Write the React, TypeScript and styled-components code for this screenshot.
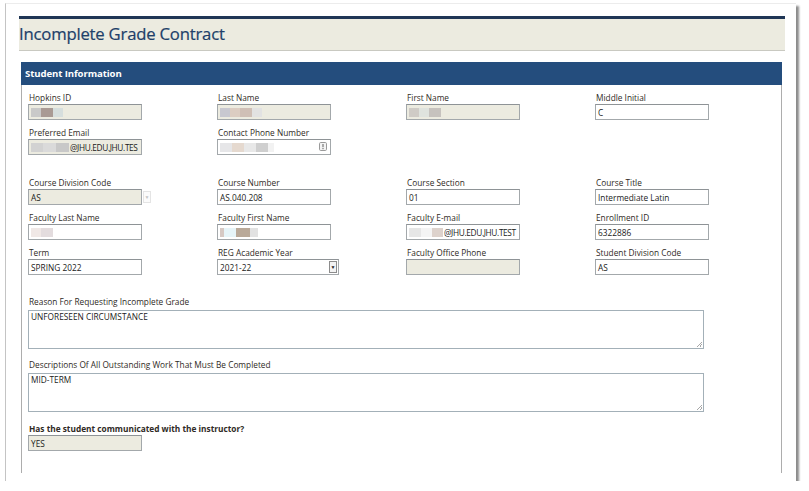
import React from "react";
import styled, { createGlobalStyle } from "styled-components";

const GlobalStyle = createGlobalStyle`
  html, body {
    margin: 0;
    padding: 0;
    background: #ffffff;
  }
  body {
    font-family: "Open Sans", "Liberation Sans", sans-serif;
  }
`;

type Block = { w: number; c: string };

const hopkinsId: Block[] = [
  { w: 10, c: "#c9c9c9" },
  { w: 12, c: "#a99a94" },
  { w: 10, c: "#d6dedd" },
];
const lastName: Block[] = [
  { w: 10, c: "#c8c8d0" },
  { w: 10, c: "#dccdc2" },
  { w: 12, c: "#cfbfb6" },
  { w: 10, c: "#e2e2e2" },
];
const firstName: Block[] = [
  { w: 10, c: "#cfcbc6" },
  { w: 10, c: "#dfe3de" },
  { w: 12, c: "#c6c2be" },
];
const emailMask: Block[] = [
  { w: 12, c: "#d2d2d2" },
  { w: 13, c: "#dadada" },
  { w: 13, c: "#c8c8c8" },
];
const phoneMask: Block[] = [
  { w: 12, c: "#e6e6e8" },
  { w: 12, c: "#e5d9cf" },
  { w: 12, c: "#e8e8e8" },
  { w: 12, c: "#cfcfcf" },
  { w: 6, c: "#f2f2f2" },
];
const facultyLast: Block[] = [
  { w: 10, c: "#f0e8e6" },
  { w: 12, c: "#e3dcde" },
];
const facultyFirst: Block[] = [
  { w: 4, c: "#d6c9c4" },
  { w: 12, c: "#e6f4f8" },
  { w: 14, c: "#b9a999" },
  { w: 8, c: "#e2e2e2" },
];
const facultyEmail: Block[] = [
  { w: 12, c: "#e6e6e6" },
  { w: 11, c: "#f4f4f4" },
  { w: 11, c: "#ddd2cc" },
];

function Redact({ blocks }: { blocks: Block[] }) {
  return (
    <Mask>
      {blocks.map((b, i) => (
        <MaskBlock key={i} style={{ width: b.w, background: b.c }} />
      ))}
    </Mask>
  );
}

function ContactIcon() {
  return (
    <svg width="8" height="9" viewBox="0 0 8 9">
      <rect x="0.5" y="0.5" width="7" height="8" rx="1.2" fill="#f4f4f4" stroke="#9a9a9a" />
      <rect x="3.4" y="2" width="1.2" height="3.2" fill="#777" />
      <rect x="3.4" y="6" width="1.2" height="1.2" fill="#777" />
    </svg>
  );
}

function App() {
  return (
    <>
      <GlobalStyle />
      <Frame>
        <TitleBar>
          <Title>Incomplete Grade Contract</Title>
        </TitleBar>

        <Panel>
          <PanelHeader>Student Information</PanelHeader>
          <PanelBody>
            <FieldGrid>
              <Field>
                <Label>Hopkins ID</Label>
                <Input $readOnly>
                  <Redact blocks={hopkinsId} />
                </Input>
              </Field>
              <Field>
                <Label>Last Name</Label>
                <Input $readOnly>
                  <Redact blocks={lastName} />
                </Input>
              </Field>
              <Field>
                <Label>First Name</Label>
                <Input $readOnly>
                  <Redact blocks={firstName} />
                </Input>
              </Field>
              <Field>
                <Label>Middle Initial</Label>
                <Input>C</Input>
              </Field>
              <Field>
                <Label>Preferred Email</Label>
                <Input $readOnly>
                  <Redact blocks={emailMask} />
                  <EmailText>@JHU.EDU.JHU.TES</EmailText>
                </Input>
              </Field>
              <Field>
                <Label>Contact Phone Number</Label>
                <Input>
                  <Redact blocks={phoneMask} />
                  <InputIcon>
                    <ContactIcon />
                  </InputIcon>
                </Input>
              </Field>
            </FieldGrid>

            <FieldGrid $gapTop={22}>
              <Field>
                <Label>Course Division Code</Label>
                <SelectRow>
                  <Input $readOnly>AS</Input>
                  <SelectButton $disabled>▼</SelectButton>
                </SelectRow>
              </Field>
              <Field>
                <Label>Course Number</Label>
                <Input>AS.040.208</Input>
              </Field>
              <Field>
                <Label>Course Section</Label>
                <Input>01</Input>
              </Field>
              <Field>
                <Label>Course Title</Label>
                <Input>Intermediate Latin</Input>
              </Field>

              <Field>
                <Label>Faculty Last Name</Label>
                <Input>
                  <Redact blocks={facultyLast} />
                </Input>
              </Field>
              <Field>
                <Label>Faculty First Name</Label>
                <Input>
                  <Redact blocks={facultyFirst} />
                </Input>
              </Field>
              <Field>
                <Label>Faculty E-mail</Label>
                <Input>
                  <Redact blocks={facultyEmail} />
                  <EmailText>@JHU.EDU.JHU.TEST</EmailText>
                </Input>
              </Field>
              <Field>
                <Label>Enrollment ID</Label>
                <Input>6322886</Input>
              </Field>

              <Field>
                <Label>Term</Label>
                <Input>SPRING 2022</Input>
              </Field>
              <Field>
                <Label>REG Academic Year</Label>
                <Select>
                  <span>2021-22</span>
                  <SelectButton>▼</SelectButton>
                </Select>
              </Field>
              <Field>
                <Label>Faculty Office Phone</Label>
                <Input $readOnly />
              </Field>
              <Field>
                <Label>Student Division Code</Label>
                <Input>AS</Input>
              </Field>
            </FieldGrid>

            <WideField $gapTop={21}>
              <Label>Reason For Requesting Incomplete Grade</Label>
              <TextArea>
                UNFORESEEN CIRCUMSTANCE
                <Grip />
              </TextArea>
            </WideField>

            <WideField $gapTop={10}>
              <Label>Descriptions Of All Outstanding Work That Must Be Completed</Label>
              <TextArea>
                MID-TERM
                <Grip />
              </TextArea>
            </WideField>

            <WideField $gapTop={11}>
              <Label $bold>Has the student communicated with the instructor?</Label>
              <Input $readOnly>YES</Input>
            </WideField>
          </PanelBody>
        </Panel>
      </Frame>
    </>
  );
}

const Frame = styled.div`
  margin: 3px 0 0 5px;
  width: 791px;
  height: 478px;
  box-sizing: border-box;
  background: #ffffff;
  border-left: 1px solid #c4c4c4;
  border-top: 1px solid #ececec;
  box-shadow: 3px 3px 2px rgba(0, 0, 0, 0.45);
  padding: 12px 0 0 13px;
  overflow: hidden;
`;

const TitleBar = styled.div`
  width: 766px;
  height: 35px;
  box-sizing: border-box;
  background: #ecebe0;
  border-top: 3px solid #1f3655;
  border-bottom: 1px solid #c9c9c1;
  display: flex;
  align-items: center;
`;

const Title = styled.h1`
  margin: 0;
  font-family: "Open Sans", "Liberation Sans", sans-serif;
  font-size: 16.7px;
  font-weight: 400;
  letter-spacing: -0.2px;
  color: #213f69;
  line-height: 1;
  -webkit-text-stroke: 0.2px #213f69;
`;

const Panel = styled.div`
  margin: 11px 0 0 2px;
  width: 761px;
`;

const PanelHeader = styled.div`
  height: 23px;
  background: #244d7d;
  color: #ffffff;
  font-size: 9.6px;
  font-weight: 700;
  letter-spacing: -0.1px;
  padding-left: 4px;
  display: flex;
  align-items: center;
`;

const PanelBody = styled.div`
  border-left: 1px solid #adadad;
  border-right: 1px solid #adadad;
  padding: 7px 0 22px 6px;
`;

const FieldGrid = styled.div<{ $gapTop?: number }>`
  display: grid;
  grid-template-columns: repeat(4, 189px);
  row-gap: 7px;
  margin-top: ${(p) => p.$gapTop ?? 0}px;
`;

const Field = styled.div`
  display: flex;
  flex-direction: column;
`;

const WideField = styled.div<{ $gapTop?: number }>`
  display: flex;
  flex-direction: column;
  align-items: flex-start;
  margin-top: ${(p) => p.$gapTop ?? 0}px;
`;

const Label = styled.label<{ $bold?: boolean }>`
  font-size: 8.3px;
  line-height: 12px;
  height: 12px;
  color: #2f2a25;
  font-weight: ${(p) => (p.$bold ? 700 : 400)};
  padding-left: 1px;
  white-space: nowrap;
`;

const Input = styled.div<{ $readOnly?: boolean }>`
  position: relative;
  width: 114px;
  height: 16px;
  box-sizing: border-box;
  border: 1px solid #a3a8ab;
  border-top-color: #8e9396;
  background: ${(p) => (p.$readOnly ? "#ecebe0" : "#ffffff")};
  font-size: 8.3px;
  color: #1a1a1a;
  display: flex;
  align-items: center;
  padding-left: 2px;
  white-space: nowrap;
  overflow: hidden;
`;

const EmailText = styled.span`
  letter-spacing: -0.35px;
  flex-shrink: 0;
`;

const InputIcon = styled.span`
  position: absolute;
  right: 3px;
  top: 2px;
  display: flex;
`;

const Mask = styled.span`
  display: inline-flex;
  height: 9px;
  filter: blur(0.6px);
  margin-right: 1px;
  flex-shrink: 0;
`;

const MaskBlock = styled.span`
  display: block;
  height: 100%;
`;

const SelectRow = styled.div`
  display: flex;
  align-items: center;
`;

const Select = styled.div`
  width: 122px;
  height: 16px;
  box-sizing: border-box;
  border: 1px solid #a3a8ab;
  border-top-color: #8e9396;
  background: #ffffff;
  font-size: 8.3px;
  color: #1a1a1a;
  display: flex;
  align-items: center;
  justify-content: space-between;
  padding-left: 2px;
`;

const SelectButton = styled.span<{ $disabled?: boolean }>`
  width: 8px;
  height: 12px;
  margin: 0 1px 0 ${(p) => (p.$disabled ? 1 : 0)}px;
  box-sizing: border-box;
  border: 1px solid ${(p) => (p.$disabled ? "#e4e4e4" : "#8c8c8c")};
  background: ${(p) => (p.$disabled ? "#fbfbfb" : "#f3f3f3")};
  color: ${(p) => (p.$disabled ? "#c4c4c4" : "#222222")};
  font-size: 5px;
  display: flex;
  align-items: center;
  justify-content: center;
`;

const TextArea = styled.div`
  position: relative;
  width: 676px;
  height: 39px;
  margin-top: 2px;
  box-sizing: border-box;
  border: 1px solid #a3b0b8;
  background: #ffffff;
  font-size: 8.3px;
  line-height: 10px;
  color: #1a1a1a;
  padding: 1px 2px;
`;

const Grip = styled.span`
  position: absolute;
  right: 1px;
  bottom: 1px;
  width: 5px;
  height: 5px;
  background: linear-gradient(
    135deg,
    transparent 0 45%,
    #a8a8a8 45% 55%,
    transparent 55% 70%,
    #a8a8a8 70% 80%,
    transparent 80%
  );
`;

export default App;
